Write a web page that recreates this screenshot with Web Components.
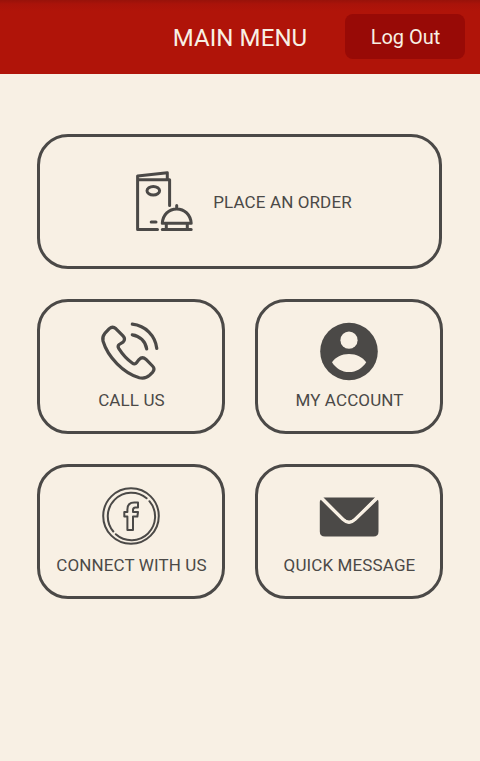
<!DOCTYPE html>
<html lang="en">
<head>
<meta charset="utf-8">
<title>Main Menu</title>
<style>
    body {
        margin: 0;
        background: #f8f0e4;
        font-family: Roboto, Arial, sans-serif;
    }
</style>
</head>
<body>
<main-menu></main-menu>
<script>
const icons = {
    order: `<svg viewBox="10 11.5 60 60" fill="none" stroke="#4b4947" stroke-width="3" stroke-linecap="round" stroke-linejoin="round">
        <path d="M32.5 69H12.6V15.5L42.3 12.2V18M12.6 19.2H44.6V45"/>
        <ellipse cx="28.3" cy="30.3" rx="6.3" ry="4.3"/>
        <path d="M26.2 61.6H31M37.3 62.8H66.2C65.6 54.3 59.5 48.4 51.7 48.4S37.8 54.3 37.3 62.8ZM51.7 48V45M41.3 63V69M62.3 63V69M37.3 69H66.2"/>
    </svg>`,
    call: `<svg viewBox="11 9 60 60" fill="none" stroke="#4b4947" stroke-width="3.2" stroke-linecap="round" stroke-linejoin="round">
        <path d="M19.3 16.6Q22.6 13.8 26 16.8L33 23.8Q36 27 33 30.2L29.2 32.5Q27.3 34 28.7 36.4C32.5 42.4 36.8 47.2 42.2 51Q44.8 53 46.5 50.7L49 47.6Q52.3 44.2 55.8 47.2L62.5 54Q65.5 57 62.5 60.3L59.7 63.2Q55.5 67.2 49.3 65.7C33.8 61.5 17.8 45.2 13 29Q12 24.8 14.8 21.4Z"/>
        <path d="M42.3 12.2C55.6 13.7 65.3 23.6 66.8 36.5M42.3 22.8C49.8 23.8 55.6 29.3 56.7 37"/>
    </svg>`,
    account: `<svg viewBox="9 9 60 60">
        <circle cx="39" cy="39.5" r="28.8" fill="#4b4947"/>
        <circle cx="39" cy="28.2" r="8.6" fill="#f8f0e4"/>
        <path fill="#f8f0e4" d="M22 50.2C25.5 45.3 31.5 42 39 42S52.5 45.3 56.2 50.2C52.3 56.3 46.3 60 39 60S25.8 56.3 22 50.2Z"/>
    </svg>`,
    facebook: `<svg viewBox="9 9 60 60" fill="none" stroke="#4b4947" stroke-width="2" stroke-linecap="round" stroke-linejoin="round">
        <circle cx="39" cy="39" r="27.8"/>
        <path d="M54.6 21.3A23.6 23.6 0 0 0 21.3 54.5M57.4 24.2A23.6 23.6 0 0 1 23.8 57.2"/>
        <path d="M35.4 53V39.5H32.3V35H35.4V32.5C35.4 28 38 25.6 42.3 25.6H46V30.5H43.3Q41 30.5 41 33V35H46L45.4 39.5H41V53Z"/>
    </svg>`,
    message: `<svg viewBox="9 9 60 60" fill="#4b4947">
        <path d="M13.3 20.6H65.1L44.4 41.3Q39 46.3 33.7 41.3Z"/>
        <path d="M10.8 22.8L31.5 43.3Q39 50.5 46.5 43.3L67.8 22.8Q68.5 23.6 68.5 25V54.5Q68.5 59.5 63.5 59.5H15Q9.8 59.5 9.8 54.5V25Q9.8 23.6 10.8 22.8Z"/>
        <path fill="none" stroke="#f8f0e4" stroke-width="2.8" d="M11.3 20.6L33.2 42.3Q39 47.9 44.9 42.3L67.1 20.6"/>
    </svg>`
};

const barTemplate = document.createElement("template");
barTemplate.innerHTML = /* html */ `
    <style>
        :host {
            display: grid;
            grid-template-columns: 120px 1fr 120px;
            align-items: center;
            box-sizing: border-box;
            height: 74px;
            padding: 0 15px;
            color: #f8f0e4;
            background: linear-gradient(#98120a 0, #a9130a 4px, #b01409 11px);
        }
        h1 {
            grid-column: 2;
            margin: 0;
            padding-top: 2px;
            text-align: center;
            font-size: 24px;
            line-height: 28px;
            font-weight: 400;
            letter-spacing: 0.1px;
        }
    </style>
    <h1><slot></slot></h1>
    <slot name="action"></slot>
`;

class MenuBar extends HTMLElement {
    constructor() {
        super();
        this.attachShadow({mode: "open"});
        this.shadowRoot.appendChild(barTemplate.content.cloneNode(true));
    }
}

const buttonTemplate = document.createElement("template");
buttonTemplate.innerHTML = /* html */ `
    <style>
        :host {
            display: block;
            height: 45px;
            margin-bottom: 1px;
        }
        button {
            width: 100%;
            height: 100%;
            padding: 0 0 0 1px;
            border: 0;
            border-radius: 8px;
            background: #980a06;
            color: inherit;
            font: 20px Roboto, Arial, sans-serif;
            cursor: pointer;
        }
    </style>
    <button type="button"><slot></slot></button>
`;

class BarButton extends HTMLElement {
    constructor() {
        super();
        this.attachShadow({mode: "open"});
        this.shadowRoot.appendChild(buttonTemplate.content.cloneNode(true));
    }
}

const tileTemplate = document.createElement("template");
tileTemplate.innerHTML = /* html */ `
    <style>
        :host {
            display: flex;
            flex-direction: column;
            align-items: center;
            box-sizing: border-box;
            height: 135px;
            padding-top: 19px;
            border: 3px solid #4b4947;
            border-radius: 31px;
            color: #4b4947;
            font-size: 17px;
            line-height: 20px;
            letter-spacing: 0.12px;
            white-space: nowrap;
            cursor: pointer;
        }
        :host([wide]) {
            grid-column: 1 / 3;
            flex-direction: row;
            justify-content: center;
            margin-right: 1px;
            padding: 0 0 0 8px;
        }
        .icon, svg {
            display: block;
            width: 60px;
            height: 60px;
            overflow: visible;
        }
        .label {
            margin-top: 9px;
            padding-left: 1px;
        }
        :host([wide]) .label {
            margin: 0 0 0 18px;
            padding: 0;
        }
    </style>
    <div class="icon"></div>
    <div class="label"><slot></slot></div>
`;

class MenuTile extends HTMLElement {
    constructor() {
        super();
        this.attachShadow({mode: "open"});
        this.shadowRoot.appendChild(tileTemplate.content.cloneNode(true));
    }

    connectedCallback() {
        this.shadowRoot.querySelector(".icon").innerHTML = icons[this.getAttribute("icon")];
    }
}

const menuTemplate = document.createElement("template");
menuTemplate.innerHTML = /* html */ `
    <style>
        :host {
            display: block;
        }
        main {
            display: grid;
            grid-template-columns: 188px 188px;
            gap: 30px;
            padding: 60px 37px;
        }
    </style>
    <menu-bar>MAIN MENU<bar-button slot="action">Log Out</bar-button></menu-bar>
    <main>
        <menu-tile icon="order" wide>PLACE AN ORDER</menu-tile>
        <menu-tile icon="call">CALL US</menu-tile>
        <menu-tile icon="account">MY ACCOUNT</menu-tile>
        <menu-tile icon="facebook">CONNECT WITH US</menu-tile>
        <menu-tile icon="message">QUICK MESSAGE</menu-tile>
    </main>
`;

class MainMenu extends HTMLElement {
    constructor() {
        super();
        this.attachShadow({mode: "open"});
        this.shadowRoot.appendChild(menuTemplate.content.cloneNode(true));
    }
}

customElements.define("menu-bar", MenuBar);
customElements.define("bar-button", BarButton);
customElements.define("menu-tile", MenuTile);
customElements.define("main-menu", MainMenu);
</script>
</body>
</html>
